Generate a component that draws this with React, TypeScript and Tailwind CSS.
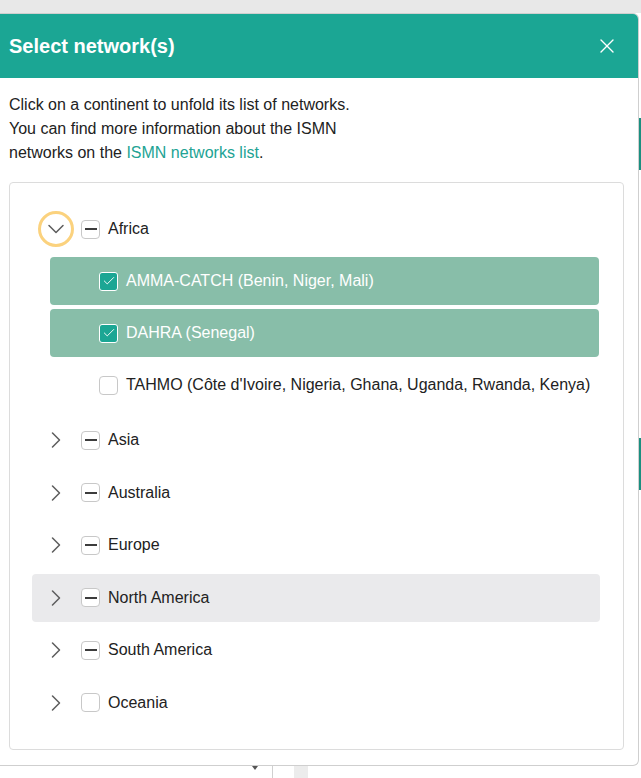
import { ChevronDown, ChevronRight, X, Check } from "lucide-react";

type State = "checked" | "partial" | "empty";

const networks: { name: string; state: State }[] = [
  { name: "AMMA-CATCH (Benin, Niger, Mali)", state: "checked" },
  { name: "DAHRA (Senegal)", state: "checked" },
  { name: "TAHMO (Côte d'Ivoire, Nigeria, Ghana, Uganda, Rwanda, Kenya)", state: "empty" },
];

const continents: { name: string; state: State; hover?: boolean }[] = [
  { name: "Asia", state: "partial" },
  { name: "Australia", state: "partial" },
  { name: "Europe", state: "partial" },
  { name: "North America", state: "partial", hover: true },
  { name: "South America", state: "partial" },
  { name: "Oceania", state: "empty" },
];

const Box = ({ state }: { state: State }) => {
  if (state === "checked") {
    return (
      <span className="w-[19px] h-[19px] rounded-[3px] border-[1.5px] border-white bg-[#1ba694] flex items-center justify-center shrink-0">
        <Check className="w-[14px] h-[14px] text-white" strokeWidth={1.6} />
      </span>
    );
  }
  return (
    <span className="w-[19px] h-[19px] rounded-[4px] border-[1.5px] border-[#c8c8c8] bg-white flex items-center justify-center shrink-0">
      {state === "partial" && <span className="w-[12px] h-[2px] bg-[#3c3c3c]" />}
    </span>
  );
};

const App = () => {
  return (
    <div className="relative w-[641px] h-[778px] bg-white overflow-hidden font-['Liberation_Sans',Arial,sans-serif] text-[#222]">
      {/* page behind the dialog */}
      <div className="h-[13px] bg-[#e8e8e8]" />
      <div className="absolute right-0 top-[118px] w-[2px] h-[52px] bg-[#1a8f80]" />
      <div className="absolute right-0 top-[438px] w-[2px] h-[52px] bg-[#1a8f80]" />
      <div className="absolute left-[272px] bottom-0 w-px h-[12px] bg-[#d0d0d0]" />
      <div className="absolute left-[252px] bottom-[8px] w-0 h-0 border-x-[3px] border-x-transparent border-t-[4px] border-t-[#555]" />
      <div className="absolute left-[294px] bottom-0 w-[14px] h-[12px] bg-[#ececec]" />

      {/* dialog */}
      <div className="absolute left-0 top-[13px] w-[639px] h-[753px] bg-white border border-l-0 border-[#cfcfcf] rounded-tr-[6px] rounded-br-[6px] overflow-hidden">
        <div className="h-[64px] bg-[#1ba694] flex items-center justify-between pl-[9px] pr-[19px]">
          <h2 className="text-[20px] font-bold text-white">Select network(s)</h2>
          <X className="w-[24px] h-[24px] text-white" strokeWidth={1.4} />
        </div>

        <p className="pt-[15px] px-[9px] text-[16px] leading-[24px]">
          Click on a continent to unfold its list of networks.
          <br />
          You can find more information about the ISMN
          <br />
          networks on the <span className="text-[#22a394]">ISMN networks list</span>.
        </p>

        <div className="mt-[17px] ml-[9px] w-[615px] border border-[#dcdcdc] rounded-[4px] pt-[22px] pb-[22px] pl-[22px] pr-[23px] text-[16px]">
          {/* Africa, unfolded */}
          <div className="h-12 flex items-center pl-[6px]">
            <span className="w-9 h-9 rounded-full border-[3px] border-[#fbd27e] flex items-center justify-center shrink-0">
              <ChevronDown className="w-[28px] h-[28px] text-[#5f5f5f] shrink-0" strokeWidth={1.3} />
            </span>
            <span className="ml-[7px]">
              <Box state="partial" />
            </span>
            <span className="ml-[8px]">Africa</span>
          </div>
          <div className="mt-1 ml-[18px] mr-[1px] flex flex-col gap-1">
            {networks.map((n) => (
              <div
                key={n.name}
                className={
                  n.state === "checked"
                    ? "h-12 flex items-center pl-[49px] rounded-[4px] bg-[#88bea9] text-white"
                    : "h-12 flex items-center pl-[49px] rounded-[4px]"
                }
              >
                <Box state={n.state} />
                <span className="ml-[8px] whitespace-nowrap">{n.name}</span>
              </div>
            ))}
          </div>

          <div className="mt-[7px] flex flex-col gap-[4.5px]">
            {continents.map((c) => (
              <div
                key={c.name}
                className={
                  c.hover
                    ? "h-12 flex items-center pl-[6px] rounded-[4px] bg-[#eaeaec]"
                    : "h-12 flex items-center pl-[6px] rounded-[4px]"
                }
              >
                <span className="w-9 h-9 flex items-center justify-center shrink-0">
                  <ChevronRight className="w-[28px] h-[28px] text-[#5f5f5f] shrink-0" strokeWidth={1.3} />
                </span>
                <span className="ml-[7px]">
                  <Box state={c.state} />
                </span>
                <span className="ml-[8px]">{c.name}</span>
              </div>
            ))}
          </div>
        </div>
      </div>
    </div>
  );
};

export default App;
